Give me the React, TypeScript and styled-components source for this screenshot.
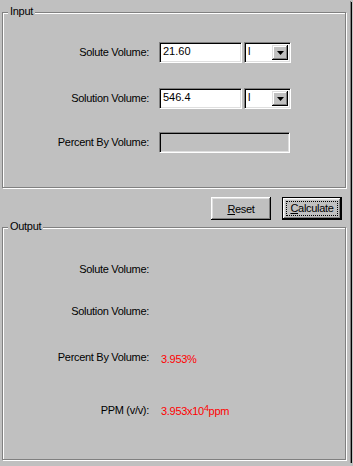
import React from 'react';
import styled, { createGlobalStyle } from 'styled-components';

const GlobalStyle = createGlobalStyle`
  html, body {
    margin: 0;
    padding: 0;
    background: #c0c0c0;
  }
  body {
    font-family: "Liberation Sans", Arial, sans-serif;
    font-size: 11px;
    color: #000;
  }
`;

const Client = styled.div`
  width: 350px;
  height: 463px;
  box-sizing: border-box;
  padding: 12px 0 0 2px;
  display: flex;
  flex-direction: column;
  background: #c0c0c0;
  box-shadow: 1px 1px 0 #808080, 2px 2px 0 #000;
  letter-spacing: -0.3px;
`;

const GroupBox = styled.section<{ $height: number; $mt?: number }>`
  position: relative;
  width: 344px;
  height: ${p => p.$height}px;
  margin-top: ${p => p.$mt ?? 0}px;
  box-sizing: border-box;
  border: 1px solid #808080;
  box-shadow: inset 1px 1px 0 #fff, 1px 1px 0 #fff;
  display: flex;
  flex-direction: column;
`;

const Legend = styled.span`
  position: absolute;
  top: -8px;
  left: 5px;
  padding: 0 2px;
  line-height: 13px;
  background: #c0c0c0;
`;

const FieldRow = styled.div<{ $mt: number }>`
  display: flex;
  align-items: center;
  height: 21px;
  margin-top: ${p => p.$mt}px;
`;

const InfoRow = styled.div<{ $mt: number }>`
  display: flex;
  align-items: flex-start;
  line-height: 13px;
  margin-top: ${p => p.$mt}px;
`;

const FieldLabel = styled.label`
  width: 146px;
  text-align: right;
  line-height: 13px;
  white-space: nowrap;
`;

const sunken = `
  box-sizing: border-box;
  border-top: 1px solid #808080;
  border-left: 1px solid #808080;
  border-bottom: 1px solid #fff;
  border-right: 1px solid #fff;
  box-shadow: inset 1px 1px 0 #000, inset -1px -1px 0 #dfdfdf;
`;

const EditBox = styled.div<{ $width: number; $disabled?: boolean }>`
  ${sunken}
  width: ${p => p.$width}px;
  height: 21px;
  margin-left: 10px;
  padding: 2px 0 0 3px;
  line-height: 13px;
  letter-spacing: 0;
  background: ${p => (p.$disabled ? '#c0c0c0' : '#fff')};
`;

const Combo = styled.div`
  ${sunken}
  width: 47px;
  height: 21px;
  margin-left: 2px;
  padding: 2px;
  display: flex;
  align-items: stretch;
  background: #fff;
`;

const ComboText = styled.span`
  flex: 1;
  padding-left: 1px;
  line-height: 13px;
`;

const ComboButton = styled.span`
  width: 16px;
  display: flex;
  align-items: center;
  justify-content: center;
  background: #c0c0c0;
  box-shadow: inset -1px -1px 0 #000, inset 1px 1px 0 #dfdfdf,
    inset -2px -2px 0 #808080, inset 2px 2px 0 #fff;
`;

const ButtonBar = styled.div`
  display: flex;
  justify-content: flex-end;
  gap: 11px;
  margin-top: 9px;
  padding-right: 8px;
`;

const PushButton = styled.button<{ $default?: boolean }>`
  width: 60px;
  height: 23px;
  padding: 0;
  box-sizing: border-box;
  font: inherit;
  letter-spacing: -0.3px;
  color: #000;
  background: #c0c0c0;
  border: ${p => (p.$default ? '1px solid #000' : 'none')};
  box-shadow: inset -1px -1px 0 #000, inset 1px 1px 0 #fff,
    inset -2px -2px 0 #808080, inset 2px 2px 0 #dfdfdf;
  display: flex;
  align-items: center;
  justify-content: center;
`;

const FocusRect = styled.span`
  border: 1px dotted #000;
  padding: 0 3px;
  line-height: 13px;
`;

const Value = styled.span<{ $pt: number }>`
  margin-left: 12px;
  padding-top: ${p => p.$pt}px;
  color: #ff0000;
  white-space: nowrap;

  sup {
    font-size: 9px;
    line-height: 0;
    vertical-align: 4px;
  }
`;

function Arrow() {
  return (
    <svg width="7" height="4" viewBox="0 0 7 4">
      <polygon points="0,0 7,0 3.5,4" fill="#000" />
    </svg>
  );
}

function UnitCombo() {
  return (
    <Combo>
      <ComboText>l</ComboText>
      <ComboButton>
        <Arrow />
      </ComboButton>
    </Combo>
  );
}

export default function App() {
  return (
    <>
      <GlobalStyle />
      <Client>
        <GroupBox $height={176}>
          <Legend>Input</Legend>
          <FieldRow $mt={29}>
            <FieldLabel>Solute Volume:</FieldLabel>
            <EditBox $width={83}>21.60</EditBox>
            <UnitCombo />
          </FieldRow>
          <FieldRow $mt={25}>
            <FieldLabel>Solution Volume:</FieldLabel>
            <EditBox $width={83}>546.4</EditBox>
            <UnitCombo />
          </FieldRow>
          <FieldRow $mt={23}>
            <FieldLabel>Percent By Volume:</FieldLabel>
            <EditBox $width={131} $disabled />
          </FieldRow>
        </GroupBox>

        <ButtonBar>
          <PushButton>
            <span>
              <u>R</u>eset
            </span>
          </PushButton>
          <PushButton $default>
            <FocusRect>
              <u>C</u>alculate
            </FocusRect>
          </PushButton>
        </ButtonBar>

        <GroupBox $height={233} $mt={7}>
          <Legend>Output</Legend>
          <InfoRow $mt={35}>
            <FieldLabel>Solute Volume:</FieldLabel>
          </InfoRow>
          <InfoRow $mt={29}>
            <FieldLabel>Solution Volume:</FieldLabel>
          </InfoRow>
          <InfoRow $mt={33}>
            <FieldLabel>Percent By Volume:</FieldLabel>
            <Value $pt={2}>3.953%</Value>
          </InfoRow>
          <InfoRow $mt={38}>
            <FieldLabel>PPM (v/v):</FieldLabel>
            <Value $pt={1}>
              3.953x10<sup>4</sup>ppm
            </Value>
          </InfoRow>
        </GroupBox>
      </Client>
    </>
  );
}
